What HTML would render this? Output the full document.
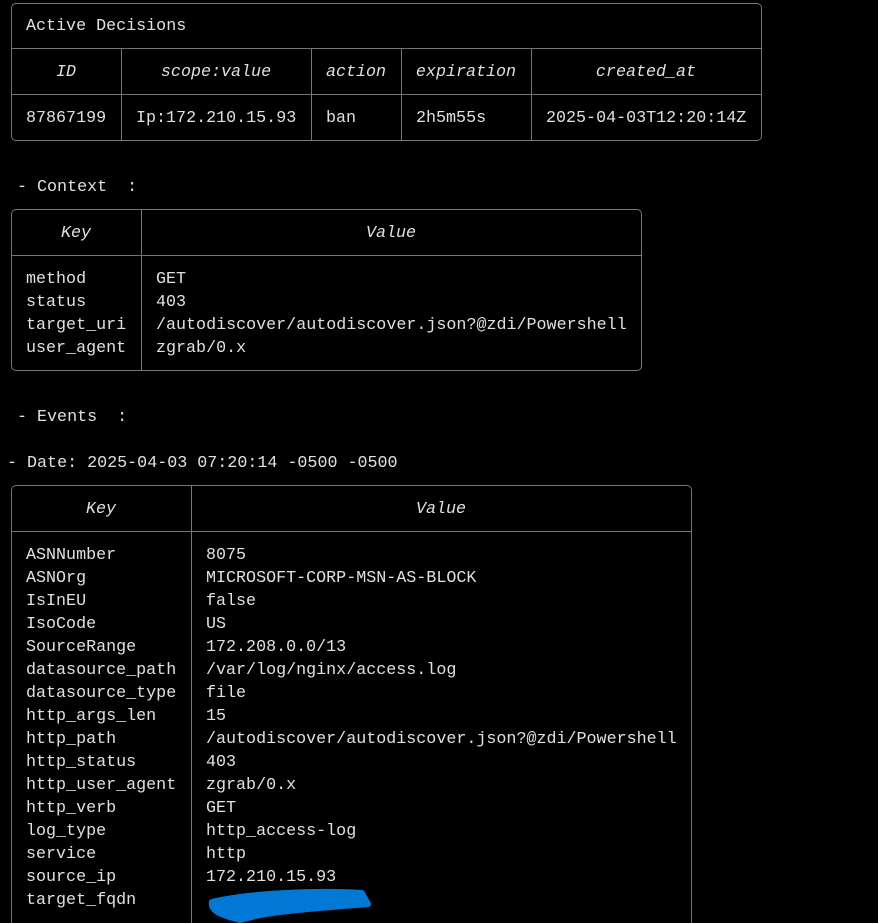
<!DOCTYPE html>
<html style="overflow:hidden;height:923px"><head><style>
body{margin:0;background:#000;width:878px;height:923px;overflow:hidden;position:relative;font-family:"Liberation Mono",monospace;font-size:16.7px;color:#e0e0e0}
.t{position:absolute;line-height:23px;white-space:pre}
.b{position:absolute;border:1px solid #777;border-radius:5px;box-sizing:border-box}
.h{position:absolute;height:1px;background:#777}
.v{position:absolute;width:1px;background:#777}
i{font-style:italic}
.c{text-align:center}
</style></head><body>
<div class="b" style="left:11px;top:3px;width:751px;height:138px"></div>
<div class="h" style="left:11px;top:48px;width:751px"></div>
<div class="h" style="left:11px;top:94px;width:751px"></div>
<div class="v" style="left:121px;top:48px;height:92px"></div>
<div class="v" style="left:311px;top:48px;height:92px"></div>
<div class="v" style="left:401px;top:48px;height:92px"></div>
<div class="v" style="left:531px;top:48px;height:92px"></div>
<div class="t" style="left:26px;top:15px">Active Decisions</div>
<div class="t c" style="left:11px;width:110px;top:61px"><i>ID</i></div>
<div class="t c" style="left:121px;width:190px;top:61px"><i>scope:value</i></div>
<div class="t c" style="left:311px;width:90px;top:61px"><i>action</i></div>
<div class="t c" style="left:401px;width:130px;top:61px"><i>expiration</i></div>
<div class="t c" style="left:531px;width:230px;top:61px"><i>created_at</i></div>
<div class="t" style="left:26px;top:107px">87867199</div>
<div class="t" style="left:136px;top:107px">Ip:172.210.15.93</div>
<div class="t" style="left:326px;top:107px">ban</div>
<div class="t" style="left:416px;top:107px">2h5m55s</div>
<div class="t" style="left:546px;top:107px">2025-04-03T12:20:14Z</div>

<div class="t" style="left:17px;top:176px">- Context  :</div>
<div class="b" style="left:11px;top:209px;width:631px;height:162px"></div>
<div class="h" style="left:11px;top:255px;width:631px"></div>
<div class="v" style="left:141px;top:209px;height:161px"></div>
<div class="t c" style="left:11px;width:130px;top:222px"><i>Key</i></div>
<div class="t c" style="left:141px;width:500px;top:222px"><i>Value</i></div>
<div class="t" style="left:26px;top:268px">method
status
target_uri
user_agent</div>
<div class="t" style="left:156px;top:268px">GET
403
/autodiscover/autodiscover.json?@zdi/Powershell
zgrab/0.x</div>

<div class="t" style="left:17px;top:406px">- Events  :</div>
<div class="t" style="left:7px;top:452px">- Date: 2025-04-03 07:20:14 -0500 -0500</div>
<div class="b" style="left:11px;top:485px;width:681px;height:438px;border-bottom:none;border-radius:5px 5px 0 0"></div>
<div class="h" style="left:11px;top:531px;width:681px"></div>
<div class="v" style="left:191px;top:485px;height:438px"></div>
<div class="t c" style="left:11px;width:180px;top:498px"><i>Key</i></div>
<div class="t c" style="left:191px;width:500px;top:498px"><i>Value</i></div>
<div class="t" style="left:26px;top:544px">ASNNumber
ASNOrg
IsInEU
IsoCode
SourceRange
datasource_path
datasource_type
http_args_len
http_path
http_status
http_user_agent
http_verb
log_type
service
source_ip
target_fqdn</div>
<div class="t" style="left:206px;top:544px">8075
MICROSOFT-CORP-MSN-AS-BLOCK
false
US
172.208.0.0/13
/var/log/nginx/access.log
file
15
/autodiscover/autodiscover.json?@zdi/Powershell
403
zgrab/0.x
GET
http_access-log
http
172.210.15.93</div>
<svg style="position:absolute;left:0;top:0" width="878" height="923"><path d="M212 902 C250 893 320 890 362 893 L368 904 C330 907 290 910 260 915 L240 920 C225 916 210 912 212 902Z" fill="#0078d4" stroke="#0078d4" stroke-width="6" stroke-linejoin="round"/></svg>
</body></html>
